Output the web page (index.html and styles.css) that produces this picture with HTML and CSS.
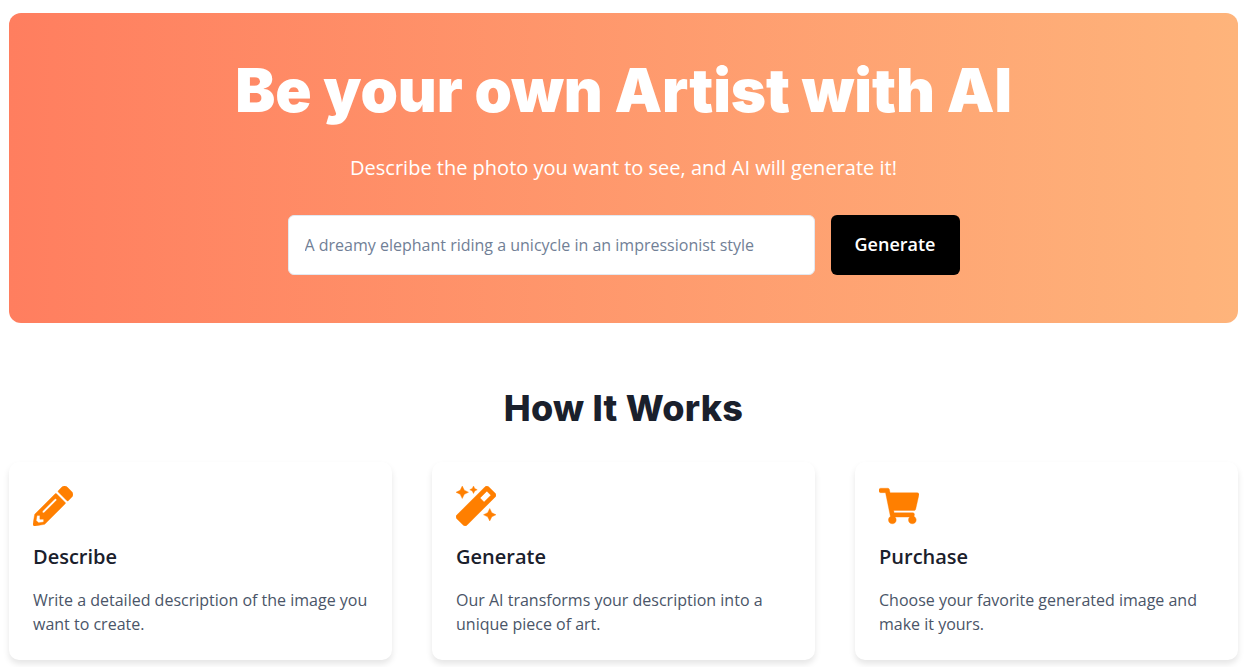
FILE: index.html
```html
<!DOCTYPE html>
<html lang="en">
<head>
    <meta charset="UTF-8">
    <meta name="viewport" content="width=device-width, initial-scale=1.0">
    <title>Be your own Artist with AI</title>
    <link rel="stylesheet" href="styles.css">
</head>
<body>
    <section class="hero">
        <h1>Be your own Artist with AI</h1>
        <p class="hero-sub">Describe the photo you want to see, and AI will generate it!</p>
        <form class="prompt-form">
            <input class="prompt-input" type="text" placeholder="A dreamy elephant riding a unicycle in an impressionist style">
            <button class="button" type="button">Generate</button>
        </form>
    </section>

    <section class="steps">
        <h2>How It Works</h2>
        <div class="step-grid">
            <div class="step-card">
                <svg class="step-icon" viewBox="0 0 512 512"><path d="M497.9 142.1l-46.1 46.1c-4.7 4.7-12.3 4.7-17 0l-111-111c-4.7-4.7-4.7-12.3 0-17l46.1-46.1c18.7-18.7 49.1-18.7 67.9 0l60.1 60.1c18.8 18.7 18.8 49.1 0 67.9zM284.2 99.8L21.6 362.4.4 483.9c-2.9 16.4 11.4 30.6 27.8 27.8l121.5-21.3 262.6-262.6c4.7-4.7 4.7-12.3 0-17l-111-111c-4.8-4.7-12.4-4.7-17.1 0zM124.1 339.9c-5.5-5.5-5.5-14.3 0-19.8l154-154c5.5-5.5 14.3-5.5 19.8 0s5.5 14.3 0 19.8l-154 154c-5.5 5.5-14.3 5.5-19.8 0zM88 424h48v36.3l-64.5 11.3-31.1-31.1L51.7 376H88v48z"/></svg>
                <h3>Describe</h3>
                <p>Write a detailed description of the image you want to create.</p>
            </div>
            <div class="step-card">
                <svg class="step-icon" viewBox="0 0 512 512"><path d="M224 96l16-32 32-16-32-16-16-32-16 32-32 16 32 16 16 32zM80 160l26.66-53.33L160 80l-53.34-26.67L80 0 53.34 53.33 0 80l53.34 26.67L80 160zm352 128l-26.66 53.33L352 368l53.34 26.67L432 448l26.66-53.33L512 368l-53.34-26.67L432 288zm70.62-193.77L417.77 9.38C411.53 3.12 403.34 0 395.15 0c-8.19 0-16.38 3.12-22.63 9.38L9.38 372.52c-12.5 12.5-12.5 32.76 0 45.25l84.85 84.85c6.25 6.25 14.44 9.37 22.62 9.37 8.19 0 16.38-3.12 22.63-9.37l363.14-363.15c12.5-12.48 12.5-32.75 0-45.24zM359.45 203.46l-50.91-50.91 86.6-86.6 50.91 50.91-86.6 86.6z"/></svg>
                <h3>Generate</h3>
                <p>Our AI transforms your description into a unique piece of art.</p>
            </div>
            <div class="step-card">
                <svg class="step-icon" viewBox="0 -32 576 576"><path d="M528.12 301.319l47.273-208C578.806 78.301 567.391 64 551.99 64H159.208l-9.166-44.81C147.758 8.021 137.93 0 126.529 0H24C10.745 0 0 10.745 0 24v16c0 13.255 10.745 24 24 24h69.883l70.248 343.435C147.325 417.1 136 435.222 136 456c0 30.928 25.072 56 56 56s56-25.072 56-56c0-15.674-6.447-29.835-16.824-40h209.647C430.447 426.165 424 440.326 424 456c0 30.928 25.072 56 56 56s56-25.072 56-56c0-22.172-12.888-41.332-31.579-50.405l5.517-24.276c3.413-15.018-8.002-29.319-23.403-29.319H218.117l-6.545-32h293.145c11.206 0 20.92-7.754 23.403-18.681z"/></svg>
                <h3>Purchase</h3>
                <p>Choose your favorite generated image and make it yours.</p>
            </div>
        </div>
    </section>
</body>
</html>
```

FILE: styles.css
```css
* {
    box-sizing: border-box;
}
body {
    margin: 0;
    padding: 13px 8px 0 9px;
    font-family: 'Open Sans', sans-serif;
    background-color: #fff;
    color: #1a202c;
    height: 667px;
    overflow: hidden;
}
.hero {
    height: 310px;
    padding-top: 40px;
    background: linear-gradient(90deg, #ff7e5f, #feb47b);
    border-radius: 12px;
    color: #fff;
    text-align: center;
}
.hero h1 {
    margin: 0;
    font-family: 'Inter', sans-serif;
    font-size: 60px;
    font-weight: 900;
    line-height: 75px;
    letter-spacing: -0.1px;
}
.hero-sub {
    margin: 26px 0 0;
    font-size: 20px;
    line-height: 28px;
}
.prompt-form {
    display: flex;
    justify-content: center;
    gap: 16px;
    margin-top: 33px;
}
.prompt-input {
    width: 527px;
    height: 60px;
    padding: 0 16px;
    border: 1px solid #e2e8f0;
    border-radius: 6px;
    background: #fff;
    font-family: inherit;
    font-size: 16px;
}
.prompt-input::placeholder {
    color: #718096;
    opacity: 1;
}
.button {
    width: 129px;
    height: 60px;
    padding: 0 0 2px;
    background-color: #000;
    color: #fff;
    border: none;
    border-radius: 6px;
    font-family: inherit;
    font-size: 18px;
    font-weight: 600;
}
.steps h2 {
    margin: 60px 0 0;
    font-family: 'Inter', sans-serif;
    font-size: 36px;
    font-weight: 800;
    line-height: 50px;
    letter-spacing: 0.25px;
    text-align: center;
}
.step-grid {
    display: grid;
    grid-template-columns: repeat(3, 1fr);
    gap: 40px;
    margin-top: 29px;
}
.step-card {
    height: 198px;
    padding: 24px;
    background: #fff;
    border-radius: 10px;
    box-shadow: 0 4px 6px rgba(0, 0, 0, 0.1);
}
.step-icon {
    display: block;
    width: 40px;
    height: 40px;
    fill: #ff7f00;
    stroke: #ff7f00;
    stroke-width: 5;
}
.step-card h3 {
    margin: 17px 0 0;
    font-size: 20px;
    font-weight: 600;
    line-height: 28px;
}
.step-card p {
    margin: 17px 0 0;
    font-size: 16px;
    line-height: 24px;
    color: #4a5568;
}
```
